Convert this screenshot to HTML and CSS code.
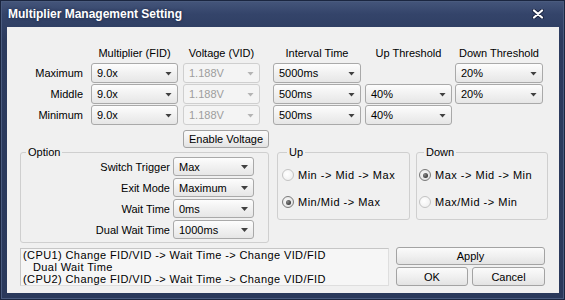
FILE: index.html
```html
<!DOCTYPE html>
<html lang="en">
<head>
  <meta charset="UTF-8">
  <meta name="viewport" content="width=device-width, initial-scale=1.0">
  <title>Multiplier Management Setting</title>
  <link rel="stylesheet" href="styles.css">
</head>
<body>
  <div class="window">
    <!-- Title bar -->
    <div class="titlebar">
      <span class="title">Multiplier Management Setting</span>
      <span class="close-btn">
        <svg width="12" height="10" viewBox="0 0 12 10">
          <path d="M2 1.5 L10 8.5 M10 1.5 L2 8.5" stroke="#1a2440" stroke-width="4" stroke-linecap="round"/>
          <path d="M2 1.5 L10 8.5 M10 1.5 L2 8.5" stroke="#fff" stroke-width="2.2" stroke-linecap="round"/>
        </svg>
      </span>
    </div>

    <div class="client">
      <!-- Tabla de estados -->
      <div class="pstate-grid">
        <div></div>
        <div class="col-head fid">Multiplier (FID)</div>
        <div class="col-head vid">Voltage (VID)</div>
        <div class="col-head interval">Interval Time</div>
        <div class="col-head up">Up Threshold</div>
        <div class="col-head down">Down Threshold</div>

        <div class="row-label">Maximum</div>
        <div><div class="combo fid"><span>9.0x</span></div></div>
        <div><div class="combo vid disabled"><span>1.188V</span></div></div>
        <div><div class="combo interval"><span>5000ms</span></div></div>
        <div></div>
        <div><div class="combo down"><span>20%</span></div></div>

        <div class="row-label">Middle</div>
        <div><div class="combo fid"><span>9.0x</span></div></div>
        <div><div class="combo vid disabled"><span>1.188V</span></div></div>
        <div><div class="combo interval"><span>500ms</span></div></div>
        <div><div class="combo up"><span>40%</span></div></div>
        <div><div class="combo down"><span>20%</span></div></div>

        <div class="row-label">Minimum</div>
        <div><div class="combo fid"><span>9.0x</span></div></div>
        <div><div class="combo vid disabled"><span>1.188V</span></div></div>
        <div><div class="combo interval"><span>500ms</span></div></div>
        <div><div class="combo up"><span>40%</span></div></div>
        <div></div>

        <div></div>
        <div></div>
        <div><button class="btn enable-btn">Enable Voltage</button></div>
      </div>

      <!-- Grupos -->
      <div class="groups">
        <fieldset class="group option-group">
          <legend>Option</legend>
          <div class="option-grid">
            <div class="opt-label">Switch Trigger</div>
            <div class="combo opt"><span>Max</span></div>
            <div class="opt-label">Exit Mode</div>
            <div class="combo opt"><span>Maximum</span></div>
            <div class="opt-label">Wait Time</div>
            <div class="combo opt"><span>0ms</span></div>
            <div class="opt-label">Dual Wait Time</div>
            <div class="combo opt"><span>1000ms</span></div>
          </div>
        </fieldset>

        <fieldset class="group radio-group up-group">
          <legend>Up</legend>
          <div class="radio"><span class="dot"></span>Min -&gt; Mid -&gt; Max</div>
          <div class="radio"><span class="dot checked"></span>Min/Mid -&gt; Max</div>
        </fieldset>

        <fieldset class="group radio-group down-group">
          <legend>Down</legend>
          <div class="radio"><span class="dot checked"></span>Max -&gt; Mid -&gt; Min</div>
          <div class="radio"><span class="dot"></span>Max/Mid -&gt; Min</div>
        </fieldset>
      </div>

      <!-- Parte inferior -->
      <div class="bottom">
        <div class="log">
          <div>(CPU1) Change FID/VID -&gt; Wait Time -&gt; Change VID/FID</div>
          <div class="indent">Dual Wait Time</div>
          <div>(CPU2) Change FID/VID -&gt; Wait Time -&gt; Change VID/FID</div>
        </div>
        <div class="actions">
          <button class="btn apply-btn">Apply</button>
          <div class="action-row">
            <button class="btn ok-btn">OK</button>
            <button class="btn cancel-btn">Cancel</button>
          </div>
        </div>
      </div>
    </div>
  </div>
</body>
</html>
```

FILE: styles.css
```css
/* Estilos Globales */
body {
  margin: 0;
  font-family: "Liberation Sans", Arial, sans-serif;
  font-size: 11px;
  color: #000;
  background: #fff;
}

/* Ventana */
.window {
  width: 565px;
  height: 300px;
  box-sizing: border-box;
  padding: 0 6px 7px 7px;
  display: flex;
  flex-direction: column;
  background: linear-gradient(#46577c, #34446a 14px, #2c3b5e 40px, #2a395b);
  box-shadow: inset 0 0 0 1px #1b2640, inset 0 0 0 2px #4a5b7e;
}

.titlebar {
  flex: none;
  height: 27px;
  display: flex;
  align-items: center;
  padding-left: 1px;
}

.title {
  font-size: 12px;
  font-weight: bold;
  color: #fff;
  text-shadow: 0 0 3px rgba(10, 20, 40, 0.6);
}

.close-btn {
  margin-left: auto;
  margin-right: 15px;
  display: flex;
}

.client {
  flex: 1;
  background: #f0f0f0;
}

/* Tabla de estados */
.pstate-grid {
  display: grid;
  grid-template-columns: 84px 92px 90px 92px 90px 88px;
  grid-template-rows: 16px 20px 20px 20px auto;
  row-gap: 1px;
  padding-top: 19px;
}

.col-head {
  line-height: 14px;
  text-align: center;
  white-space: nowrap;
}

.row-label {
  display: flex;
  align-items: center;
  justify-content: flex-end;
  padding-right: 8px;
}

.fid { width: 87px; }
.vid { width: 77px; }
.interval { width: 88px; }
.up { width: 87px; }
.down { width: 88px; }

/* Combos */
.combo {
  box-sizing: border-box;
  height: 20px;
  display: flex;
  align-items: center;
  justify-content: space-between;
  padding: 0 5px 0 5px;
  border: 1px solid #a9a9a9;
  border-radius: 3px;
  background: linear-gradient(#fdfdfd, #f1f1f1 50%, #e6e6e6);
}

.combo::after {
  content: "";
  width: 7px;
  height: 4px;
  margin-top: 1px;
  background: #404040;
  clip-path: polygon(0 0, 100% 0, 50% 100%);
}

.combo.disabled {
  border-color: #cfcfcf;
  background: #f4f4f4;
  color: #9d9d9d;
}

.combo.disabled::after {
  background: #b4b4b4;
}

/* Botones */
.btn {
  box-sizing: border-box;
  margin: 0;
  padding: 0;
  font-family: inherit;
  font-size: 11px;
  color: #000;
  border: 1px solid #a3a3a3;
  border-radius: 3px;
  background: linear-gradient(#fbfbfb, #f0f0f0 50%, #e3e3e3);
}

.enable-btn {
  width: 86px;
  height: 18px;
  margin-top: 4px;
}

/* Grupos */
.groups {
  display: flex;
  align-items: flex-start;
  margin-top: -2px;
  padding-left: 13px;
}

.group {
  margin: 0;
  padding: 0;
  min-width: 0;
  box-sizing: border-box;
  border: 1px solid #cfcfcf;
  border-radius: 3px;
}

.group legend {
  margin-left: 5px;
  padding: 0 2px;
  line-height: 12px;
}

.option-group {
  width: 249px;
  padding-bottom: 3px;
}

.option-grid {
  display: grid;
  grid-template-columns: 149px 81px;
  grid-auto-rows: 19px;
  column-gap: 3px;
  row-gap: 2px;
  margin-top: -1px;
}

.opt-label {
  display: flex;
  align-items: center;
  justify-content: flex-end;
  white-space: nowrap;
}

.combo.opt {
  height: 19px;
}

.radio-group {
  display: flex;
  flex-direction: column;
  gap: 13px;
  padding: 10px 0 10px 0;
}

.up-group {
  width: 133px;
  margin-left: 8px;
  padding-left: 4px;
}

.down-group {
  width: 132px;
  margin-left: 6px;
  padding-left: 2px;
}

.radio {
  display: flex;
  align-items: center;
  gap: 4px;
  line-height: 14px;
  letter-spacing: 0.5px;
  white-space: nowrap;
}

.dot {
  width: 12px;
  height: 12px;
  box-sizing: border-box;
  border-radius: 50%;
  border: 1px solid #c3c3c3;
  background: radial-gradient(circle at 40% 40%, #ffffff, #ececec);
  display: flex;
  align-items: center;
  justify-content: center;
}

.dot.checked {
  border-color: #7a7a7a;
  background: radial-gradient(circle at 40% 40%, #f8f8f8, #dcdcdc);
}

.dot.checked::after {
  content: "";
  width: 5px;
  height: 5px;
  border-radius: 50%;
  background: radial-gradient(circle at 35% 35%, #8a8a8a, #1e1e1e);
}

/* Parte inferior */
.bottom {
  display: flex;
  align-items: flex-start;
  margin-top: 5px;
  padding-left: 13px;
}

.log {
  box-sizing: border-box;
  width: 369px;
  height: 38px;
  padding: 0 2px;
  line-height: 12px;
  letter-spacing: 0.4px;
  border: 1px solid #c6c6c6;
  border-right-color: #dedede;
  border-bottom-color: #dedede;
  background: #f6f6f6;
  white-space: nowrap;
}

.log .indent {
  padding-left: 10px;
}

.actions {
  width: 149px;
  margin-left: 7px;
  margin-top: -1px;
  display: flex;
  flex-direction: column;
  gap: 2px;
}

.apply-btn {
  height: 18px;
}

.action-row {
  display: flex;
  justify-content: space-between;
}

.ok-btn {
  width: 72px;
  height: 19px;
}

.cancel-btn {
  width: 73px;
  height: 19px;
}
```
